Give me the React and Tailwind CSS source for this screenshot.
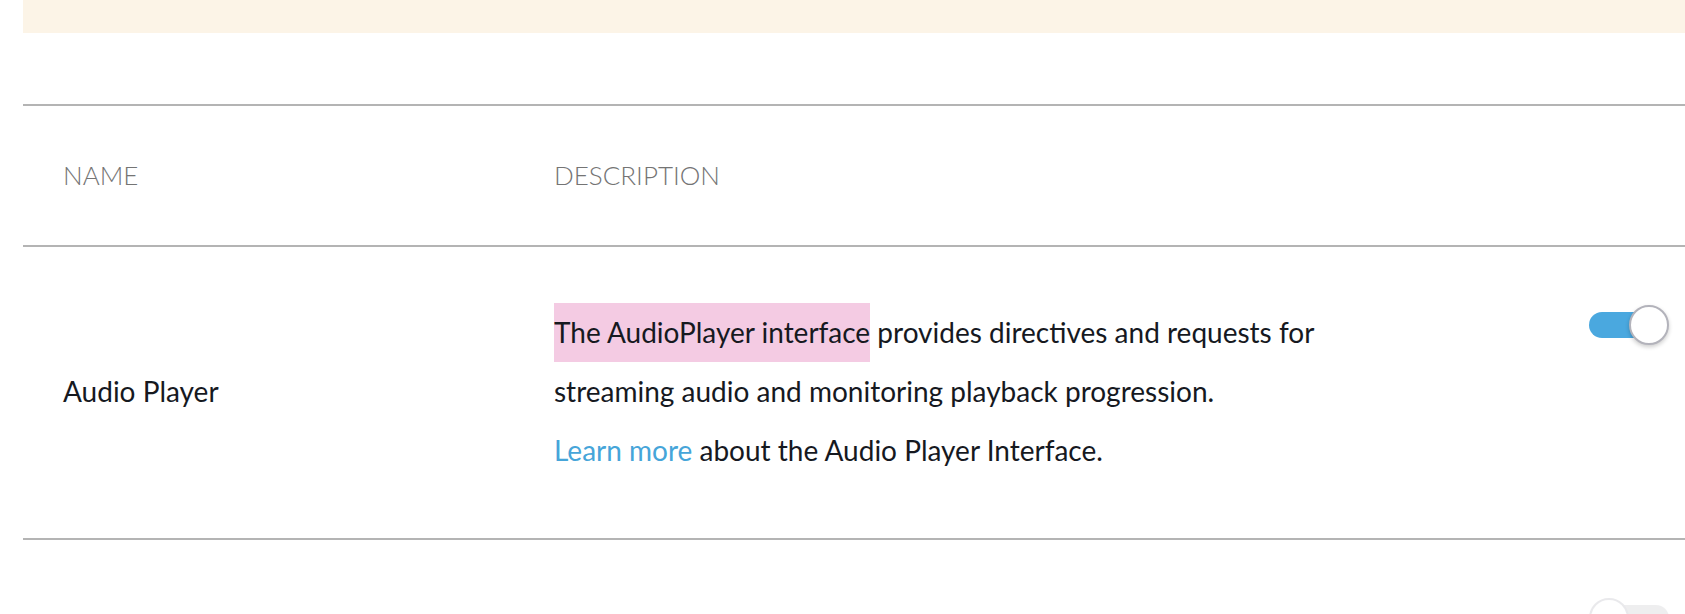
const Toggle = ({ on }) => {
  if (on) {
    return (
      <div className="relative w-[80px] h-[40px] shrink-0">
        <div className="absolute left-0 top-[7px] w-[66px] h-[26px] rounded-full bg-[#4aa8df]" />
        <div className="absolute right-0 top-0 w-[40px] h-[40px] rounded-full bg-white border-2 border-[#b3b3bb] shadow-[0_2px_4px_rgba(0,0,0,0.2)]" />
      </div>
    );
  }
  return (
    <div className="relative w-[80px] h-[40px] shrink-0 opacity-60">
      <div className="absolute right-0 top-[7px] w-[66px] h-[26px] rounded-full bg-[#e4e4e6]" />
      <div className="absolute left-0 top-0 w-[40px] h-[40px] rounded-full bg-white border-2 border-[#dcdce0]" />
    </div>
  );
};

export default function App() {
  return (
    <div className="w-full h-[614px] overflow-hidden bg-white font-['Lato',sans-serif] text-[#16191f]">
      <div className="ml-[23px] h-[33px] bg-[#fcf4e7]" />

      <div className="ml-[23px] mt-[71px]">
        {/* header */}
        <div className="flex items-center h-[143px] border-t-2 border-b-2 border-[#b4b4b4] text-[26px] font-light text-[#747474]">
          <div className="w-[531px] pl-[40px]">NAME</div>
          <div>DESCRIPTION</div>
        </div>

        {/* audio player row */}
        <div className="flex items-center border-b-2 border-[#b4b4b4] pt-[56px] pb-[58px] text-[28px] leading-[59px]">
          <div className="w-[531px] pl-[40px] shrink-0">Audio Player</div>
          <div className="w-[800px] shrink-0">
            <p>
              <span className="inline-block bg-[#f4cbe3]">The AudioPlayer interface</span>{" "}
              provides directives and requests for streaming audio and monitoring playback progression.
            </p>
            <p>
              <a className="text-[#46a5d9]">Learn more</a> about the Audio Player Interface.
            </p>
          </div>
          <div className="self-start ml-auto mr-[16px] mt-[2px]">
            <Toggle on />
          </div>
        </div>

        {/* next row */}
        <div className="flex h-[292px] pt-[58px]">
          <div className="ml-auto mr-[16px]">
            <Toggle />
          </div>
        </div>
      </div>
    </div>
  );
}
